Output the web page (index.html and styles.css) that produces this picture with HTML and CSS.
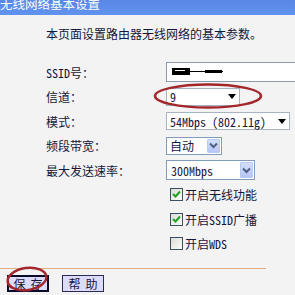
FILE: index.html
```html
<!DOCTYPE html>
<html lang="zh">
<head>
<meta charset="utf-8">
<link rel="stylesheet" href="styles.css">
</head>
<body>
<div class="page">
  <div class="hdr"><div class="hdr-t">无线网络基本设置</div></div>
  <div class="content">
    <p class="intro">本页面设置路由器无线网络的基本参数。</p>
    <div class="form">
      <div class="lbl"><span class="lat">SSID</span>号：</div>
      <div class="ctl">
        <div class="input ssid">
          <svg width="60" height="10" viewBox="0 0 60 10">
            <rect x="1" y="1" width="18" height="7" fill="#000"/>
            <rect x="4" y="3" width="10" height="1" fill="#fff"/>
            <rect x="18" y="4" width="34" height="1" fill="#000"/>
            <rect x="34" y="3" width="17" height="3" fill="#000"/>
          </svg>
        </div>
      </div>
      <div class="lbl">信道：</div>
      <div class="ctl"><div class="sel ch"><span class="lat">9</span><span class="tri"></span></div></div>
      <div class="lbl">模式：</div>
      <div class="ctl"><div class="sel mode"><span class="lat">54Mbps (802.11g)</span><span class="tri"></span></div></div>
      <div class="lbl">频段带宽：</div>
      <div class="ctl"><div class="sel xp bw"><span>自动</span><span class="xpbtn"><svg width="9" height="7" viewBox="0 0 9 7"><path d="M1 1.5 L4.5 5 L8 1.5" fill="none" stroke="#4d6185" stroke-width="2"/></svg></span></div></div>
      <div class="lbl">最大发送速率：</div>
      <div class="ctl"><div class="sel xp rate"><span class="lat">300Mbps</span><span class="xpbtn"><svg width="9" height="7" viewBox="0 0 9 7"><path d="M1 1.5 L4.5 5 L8 1.5" fill="none" stroke="#4d6185" stroke-width="2"/></svg></span></div></div>
      <div class="lbl"></div>
      <div class="ctl"><div class="cb"><span class="box"><svg width="11" height="11" viewBox="0 0 11 11"><path d="M2 5 L4.5 7.5 L9 2.5" fill="none" stroke="#21a121" stroke-width="2"/></svg></span>开启无线功能</div></div>
      <div class="lbl"></div>
      <div class="ctl"><div class="cb"><span class="box"><svg width="11" height="11" viewBox="0 0 11 11"><path d="M2 5 L4.5 7.5 L9 2.5" fill="none" stroke="#21a121" stroke-width="2"/></svg></span>开启<span class="lat">SSID</span>广播</div></div>
      <div class="lbl"></div>
      <div class="ctl"><div class="cb"><span class="box"></span>开启<span class="lat">WDS</span></div></div>
    </div>
  </div>
  <div class="rule"></div>
  <div class="btns">
    <button class="btn focus">保 存</button>
    <button class="btn">帮 助</button>
  </div>
  <svg class="marks" width="295" height="295" viewBox="0 0 295 295">
    <ellipse cx="208" cy="96" rx="53" ry="11.5" fill="none" stroke="#a3282e" stroke-width="2.5"/>
    <ellipse cx="27" cy="279" rx="19.5" ry="11" fill="none" stroke="#a3282e" stroke-width="2.5" transform="rotate(-8 27 279)"/>
  </svg>
</div>
</body>
</html>
```

FILE: styles.css
```css
html, body {
  margin: 0;
  padding: 0;
  background: #f3f3f3;
}
.page {
  position: relative;
  width: 295px;
  height: 295px;
  overflow: hidden;
  font-family: "Noto Sans CJK SC", sans-serif;
  font-size: 12px;
  color: #16163a;
}
.lat {
  font-family: "Noto Sans Mono CJK SC", "Liberation Mono", monospace;
}
.hdr {
  height: 15px;
  background: linear-gradient(#5887e6, #6093ee);
  overflow: hidden;
}
.hdr-t {
  color: #fff;
  font-size: 12.5px;
  line-height: 8px;
  white-space: nowrap;
}
.content {
  padding-left: 46px;
}
.intro {
  margin: 9px 0 0;
  line-height: 20px;
  white-space: nowrap;
}
.form {
  margin-top: 16px;
  display: grid;
  grid-template-columns: 120px 1fr;
  grid-auto-rows: 24.5px;
}
.lbl {
  display: flex;
  align-items: center;
  white-space: nowrap;
}
.ctl {
  display: flex;
  align-items: center;
}
.input {
  box-sizing: border-box;
  height: 20px;
  width: 140px;
  background: #fff;
  border: 1px solid #8a9bb0;
  display: flex;
  align-items: center;
  padding-left: 4px;
}
.sel {
  box-sizing: border-box;
  height: 18px;
  background: #fff;
  border: 1px solid #a8b4c4;
  display: flex;
  align-items: center;
  justify-content: space-between;
  padding: 0 3px 0 3px;
  white-space: nowrap;
}
.ch { width: 74px; }
.mode { width: 124px; }
.tri {
  width: 0;
  height: 0;
  border-left: 4.5px solid transparent;
  border-right: 4.5px solid transparent;
  border-top: 5px solid #000;
}
.xp {
  border-color: #7f9db9;
  padding-right: 1px;
}
.bw { width: 56px; }
.rate { width: 89px; height: 20px; padding-left: 4px; }
.xpbtn {
  box-sizing: border-box;
  width: 13px;
  height: 14px;
  background: linear-gradient(#d2defc, #b4c8f6);
  border: 1px solid #b8cbf5;
  border-radius: 1px;
  display: flex;
  align-items: center;
  justify-content: center;
}
.rate .xpbtn { height: 16px; }
.cb {
  display: flex;
  align-items: center;
  padding-left: 4px;
  white-space: nowrap;
}
.box {
  box-sizing: border-box;
  width: 13px;
  height: 13px;
  border: 1px solid #3a5060;
  background: linear-gradient(135deg, #dcdcd6, #fcfcfa);
  margin-right: 2px;
  display: flex;
  align-items: center;
  justify-content: center;
}
.rule {
  margin-top: 12px;
  width: 266px;
  height: 1px;
  background: #dcae84;
}
.btns {
  display: flex;
  gap: 13px;
  margin-top: 6px;
  padding-left: 7px;
}
.btn {
  box-sizing: border-box;
  width: 42px;
  height: 17px;
  padding: 0;
  margin: 0;
  font-family: "Noto Sans CJK SC", sans-serif;
  font-size: 12px;
  line-height: 14px;
  word-spacing: 2.5px;
  color: #16163a;
  background: #dcdcfa;
  border: 1px solid #2a2a5a;
}
.btn.focus {
  border: 2px solid #0a0a2a;
}
.marks {
  position: absolute;
  left: 0;
  top: 0;
  pointer-events: none;
}
```
